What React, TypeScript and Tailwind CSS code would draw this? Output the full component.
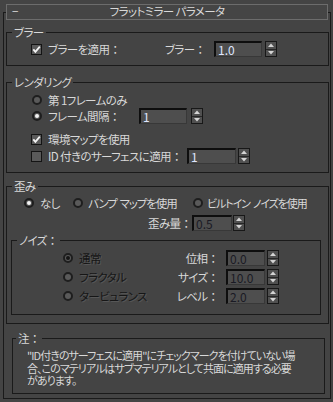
import React from "react";

const FONT =
  "font-['Noto_Sans_CJK_JP','Noto_Sans',sans-serif] [font-feature-settings:'palt']";

function C() {
  return <span className="[font-feature-settings:normal] tracking-normal">：</span>;
}

function Check({ checked }: { checked?: boolean }) {
  return (
    <div className="w-[11px] h-[11px] flex-none border border-[#141414] bg-[#5a5a5a] flex items-center justify-center">
      {checked && (
        <svg width="9" height="9" viewBox="0 0 9 9">
          <path d="M1.3 4.3 L3.4 6.8 L7.8 1.6" fill="none" stroke="#f4f4f4" strokeWidth="1.8" />
        </svg>
      )}
    </div>
  );
}

function Radio({ on, dis }: { on?: boolean; dis?: boolean }) {
  return (
    <div className="w-[11px] h-[11px] flex-none flex items-center justify-center">
      <div className="w-[10px] h-[10px] rounded-full border-2 border-[#1e1e1e] bg-[#5a5a5a] flex items-center justify-center">
        {on && (
          <div className={dis ? "w-[4px] h-[4px] rounded-full bg-[#151515]" : "w-[4px] h-[4px] rounded-full bg-[#f2f2f2]"} />
        )}
      </div>
    </div>
  );
}

function Spin({ cls }: { cls: string }) {
  return (
    <div className={`w-[12px] h-[16px] flex-none border border-[#181818] bg-[#505050] flex flex-col ${cls}`}>
      <div className="flex-1 flex items-center justify-center border-b border-[#262626]">
        <svg width="6" height="4" viewBox="0 0 6 4">
          <path d="M0 4 L3 0.5 L6 4Z" fill="#d4d4d4" />
        </svg>
      </div>
      <div className="flex-1 flex items-center justify-center">
        <svg width="6" height="4" viewBox="0 0 6 4">
          <path d="M0 0 L6 0 L3 3.5Z" fill="#d4d4d4" />
        </svg>
      </div>
    </div>
  );
}

function Num({ v, cls, dis }: { v: string; cls: string; dis?: boolean }) {
  return (
    <div
      className={`h-[16px] flex-none border-t-2 border-l-2 border-t-[#0e0e0e] border-l-[#0e0e0e] border-r border-b border-r-[#383838] border-b-[#383838] bg-[#4e4e4e] flex items-center pl-[2px] text-[12px] tracking-normal leading-none ${
        dis ? "text-[#1a1a24]" : "text-[#dfe6ff]"
      } ${cls}`}
    >
      {v}
    </div>
  );
}

function Group({
  cls,
  legend,
  lcls,
  children,
}: {
  cls: string;
  legend: React.ReactNode;
  lcls: string;
  children: React.ReactNode;
}) {
  return (
    <div className={`flex-none border border-[#1a1a1a] flex flex-col ${cls}`}>
      <div className="h-0 flex">
        <span className={`-mt-[8px] px-[2px] bg-[#444444] leading-[14px] h-[14px] whitespace-nowrap ${lcls}`}>
          {legend}
        </span>
      </div>
      {children}
    </div>
  );
}

const DIS = "text-[#161616] [text-shadow:1px_1px_0_#575757]";

export default function App() {
  return (
    <div
      className={`w-[333px] h-[402px] bg-[#444444] overflow-hidden pt-[12px] pl-[3px] text-[11.5px] tracking-[-0.6px] leading-[14px] text-[#d8d8d8] ${FONT}`}
    >
      <div className="w-[328px] h-[387px] border border-[#1a1a1a] flex flex-col">
        {/* title bar */}
        <div className="-mt-[9px] ml-[2px] w-[322px] h-[16px] flex-none border border-[#6c6c6c] bg-[#454545] grid grid-cols-[24px_1fr_24px] items-center">
          <span className="pl-[5px] leading-none">−</span>
          <span className="text-center leading-none">フラットミラー パラメータ</span>
          <span />
        </div>

        {/* blur */}
        <Group cls="mt-[12px] ml-[2px] w-[323px] h-[34px]" legend="ブラー" lcls="ml-[5px]">
          <div className="mt-[8px] h-[16px] flex items-center">
            <div className="w-[150px] flex-none flex items-center pl-[24px]">
              <Check checked />
              <span className="ml-[6px] whitespace-nowrap">
                ブラーを適用<C />
              </span>
            </div>
            <div className="w-[49px] flex-none text-right whitespace-nowrap">
              ブラー<C />
            </div>
            <Num v="1.0" cls="w-[48px] ml-[8px]" />
            <Spin cls="ml-[3px]" />
          </div>
        </Group>

        {/* rendering */}
        <Group cls="mt-[16px] ml-[2px] w-[323px] h-[91px]" legend="レンダリング" lcls="ml-[5px]">
          <div className="mt-[9px] h-[16px] flex items-center pl-[24px]">
            <Radio />
            <span className="ml-[6px] whitespace-nowrap">第 1フレームのみ</span>
          </div>
          <div className="h-[16px] flex items-center">
            <div className="w-[132px] flex-none flex items-center pl-[24px]">
              <Radio on />
              <span className="ml-[6px] whitespace-nowrap">
                フレーム間隔<C />
              </span>
            </div>
            <Num v="1" cls="w-[48px]" />
            <Spin cls="ml-[4px]" />
          </div>
          <div className="mt-[7px] h-[16px] flex items-center pl-[24px]">
            <Check checked />
            <span className="ml-[6px] whitespace-nowrap">環境マップを使用</span>
          </div>
          <div className="mt-[1px] h-[16px] flex items-center">
            <div className="w-[180px] flex-none flex items-center pl-[24px]">
              <Check />
              <span className="ml-[6px] whitespace-nowrap">
                ID 付きのサーフェスに適用<C />
              </span>
            </div>
            <Num v="1" cls="w-[49px]" />
            <Spin cls="ml-[2px]" />
          </div>
        </Group>

        {/* distortion */}
        <Group cls="mt-[13px] ml-[2px] w-[323px] h-[138px]" legend="歪み" lcls="ml-[5px]">
          <div className="mt-[8px] h-[16px] flex items-center">
            <div className="w-[65px] flex-none flex items-center pl-[16px]">
              <Radio on />
              <span className="ml-[6px] whitespace-nowrap">なし</span>
            </div>
            <div className="w-[120px] flex-none flex items-center">
              <Radio />
              <span className="ml-[5px] whitespace-nowrap tracking-[-1.1px]">
                バンプ<span className="ml-[3px]">マップを使用</span>
              </span>
            </div>
            <div className="flex-none flex items-center">
              <Radio />
              <span className="ml-[4px] whitespace-nowrap text-[11px] tracking-[-1.1px]">
                ビルトイン<span className="ml-[3px]">ノイズを使用</span>
              </span>
            </div>
          </div>
          <div className="mt-[4px] h-[16px] flex items-center">
            <div className="w-[185px] flex-none text-right whitespace-nowrap">
              歪み量<C />
            </div>
            <Num v="0.5" cls="w-[40px]" dis />
            <Spin cls="ml-[1px]" />
          </div>

          {/* noise */}
          <Group
            cls="mt-[9px] ml-[4px] w-[310px] h-[75px]"
            legend={
              <>
                ノイズ<C />
              </>
            }
            lcls="ml-[5px]"
          >
            {[
              { l: "通常", r: "位相", v: "0.0", on: true, mt: "mt-[9px]" },
              { l: "フラクタル", r: "サイズ", v: "10.0", on: false, mt: "mt-[3px]" },
              { l: "タービュランス", r: "レベル", v: "2.0", on: false, mt: "mt-[3px]" },
            ].map((row) => (
              <div key={row.l} className={`h-[16px] flex items-center ${row.mt}`}>
                <div className="w-[150px] flex-none flex items-center pl-[50px]">
                  <Radio on={row.on} dis />
                  <span className={`ml-[6px] whitespace-nowrap ${DIS}`}>{row.l}</span>
                </div>
                <div className="w-[57px] flex-none text-right whitespace-nowrap">
                  {row.r}
                  <C />
                </div>
                <Num v={row.v} cls="w-[39px] ml-[7px]" dis />
                <Spin cls="ml-[2px]" />
              </div>
            ))}
          </Group>
        </Group>

        {/* note */}
        <Group
          cls="mt-[14px] ml-[8px] w-[313px] h-[56px]"
          legend={
            <>
              注<C />
            </>
          }
          lcls="ml-[3px]"
        >
          <div className="mt-[10px] pl-[14px] text-[11px] tracking-[-0.95px] leading-[12.5px] whitespace-nowrap">
            "ID付きのサーフェスに適用"にチェックマークを付けていない場
            <br />
            合、このマテリアルはサブマテリアルとして共面に適用する必要
            <br />
            があります。
          </div>
        </Group>
      </div>
    </div>
  );
}
